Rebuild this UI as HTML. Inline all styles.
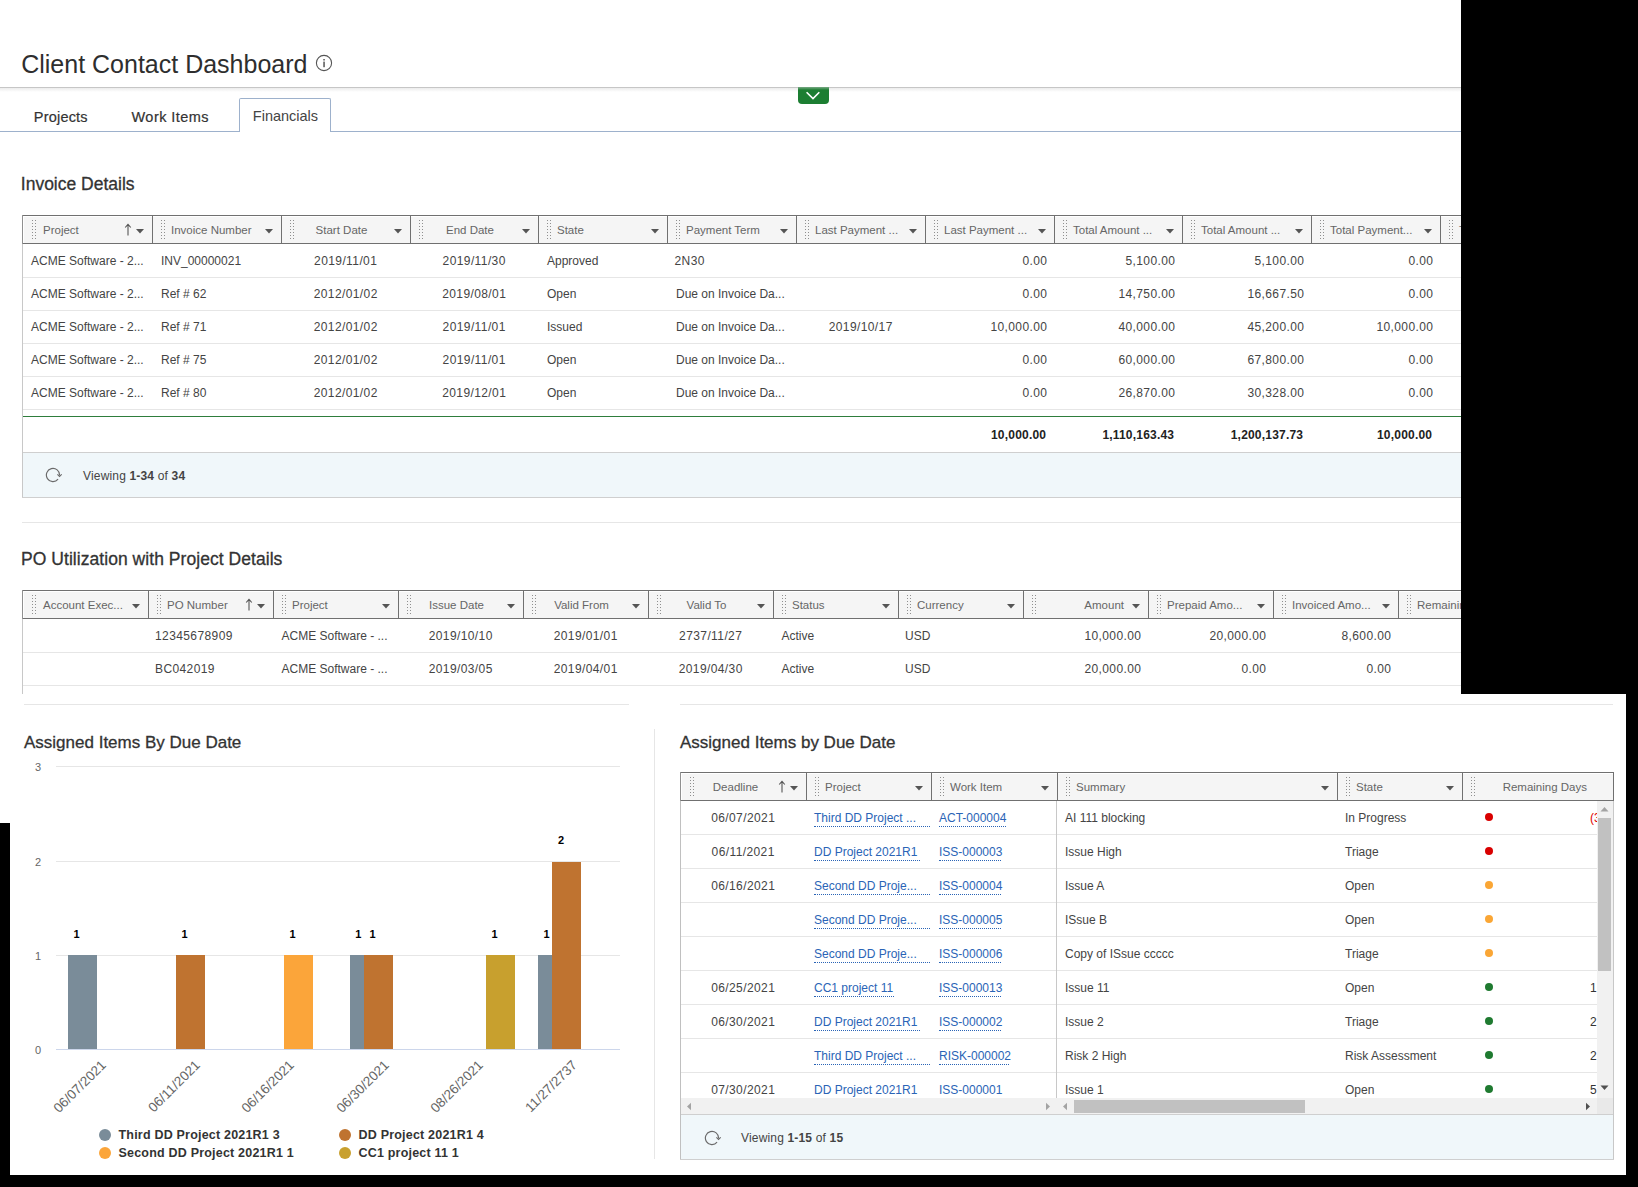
<!DOCTYPE html>
<html><head><meta charset="utf-8"><style>
html,body{margin:0;padding:0;}
body{width:1638px;height:1187px;background:#000;position:relative;overflow:hidden;font-family:"Liberation Sans",sans-serif;}
.t{position:absolute;white-space:nowrap;}
.r{position:absolute;}
</style></head><body>
<div class="r" style="left:0;top:0;width:1461px;height:694px;overflow:hidden;background:#fff">
<div class="t" style="top:48.84px;font-size:25px;line-height:30px;color:#2e2e2e;left:21.2px;">Client Contact Dashboard</div>
<svg class="r" style="left:314px;top:53px" width="20" height="20"><circle cx="10" cy="10" r="7.6" fill="none" stroke="#555" stroke-width="1.1"/><rect x="9.3" y="8.6" width="1.5" height="5.6" fill="#555"/><rect x="9.3" y="6" width="1.5" height="1.5" fill="#555"/></svg>
<div class="r" style="left:0px;top:87px;width:1461px;height:1px;background:#c6c6c6;"></div>
<div class="r" style="left:0px;top:88px;width:1461px;height:4px;background:linear-gradient(#ececec,#fff);"></div>
<svg class="r" style="left:798px;top:87px" width="31" height="17"><path d="M0 0H31V13Q31 17 27 17H4Q0 17 0 13Z" fill="#1c7e32"/><rect x="0" y="0" width="31" height="3" fill="url(#gg)"/><path d="M8.6 5.2L15 11.6L21.3 5.2" fill="none" stroke="#fff" stroke-width="1.6"/><defs><linearGradient id="gg" x1="0" y1="0" x2="0" y2="1"><stop offset="0" stop-color="#7aa985"/><stop offset="1" stop-color="#1c7e32"/></linearGradient></defs></svg>
<div class="r" style="left:0px;top:131px;width:239px;height:1px;background:#9db1cc;"></div>
<div class="r" style="left:331px;top:131px;width:1130px;height:1px;background:#9db1cc;"></div>
<div class="r" style="left:239px;top:98px;width:90px;height:33px;border:1px solid #9db1cc;border-bottom:none;border-radius:2px 2px 0 0;background:#fff"></div>
<div class="t" style="top:108.78px;font-size:14.5px;line-height:17px;color:#333;letter-spacing:0.2px;-webkit-text-stroke:0.2px #333;left:33.8px;">Projects</div>
<div class="t" style="top:108.78px;font-size:14.5px;line-height:17px;color:#333;letter-spacing:0.45px;-webkit-text-stroke:0.2px #333;left:131.5px;">Work Items</div>
<div class="t" style="top:108.48px;font-size:14.5px;line-height:17px;color:#444;left:252.8px;">Financials</div>
<div class="t" style="top:174.44px;font-size:17.5px;line-height:21px;color:#333;-webkit-text-stroke:0.3px #333;left:20.8px;">Invoice Details</div>
<div class="r" style="left:22px;top:215px;width:1439px;height:1px;background:#707070;"></div>
<div class="r" style="left:22px;top:243px;width:1439px;height:1px;background:#707070;"></div>
<div class="r" style="left:23px;top:216px;width:1438px;height:27px;background:#fff;"></div>
<div class="r" style="left:24px;top:217px;width:1437px;height:26px;background:#f5f5f5;"></div>
<div class="r" style="left:22px;top:215px;width:1px;height:29px;background:#909090;"></div>
<svg class="r" style="left:32px;top:220px" width="5" height="21" fill="#8f8f8f"><rect x="0" y="0" width="1" height="1"/><rect x="3" y="0" width="1" height="1"/><rect x="0" y="3" width="1" height="1"/><rect x="3" y="3" width="1" height="1"/><rect x="0" y="6" width="1" height="1"/><rect x="3" y="6" width="1" height="1"/><rect x="0" y="9" width="1" height="1"/><rect x="3" y="9" width="1" height="1"/><rect x="0" y="12" width="1" height="1"/><rect x="3" y="12" width="1" height="1"/><rect x="0" y="15" width="1" height="1"/><rect x="3" y="15" width="1" height="1"/><rect x="0" y="18" width="1" height="1"/><rect x="3" y="18" width="1" height="1"/></svg>
<div class="t" style="top:223.02px;font-size:11.5px;line-height:14px;color:#666;left:43px;">Project</div>
<svg class="r" style="left:135.5px;top:229px" width="8" height="5"><path d="M0 0H8L4 4.5Z" fill="#555"/></svg>
<svg class="r" style="left:123.5px;top:223px" width="8" height="13"><path d="M4 1.5V12.5M1.2 4.5L4 1.3L6.8 4.5" fill="none" stroke="#555" stroke-width="1.1"/></svg>
<div class="r" style="left:152px;top:215px;width:1px;height:28px;background:#707070;"></div>
<svg class="r" style="left:161px;top:220px" width="5" height="21" fill="#8f8f8f"><rect x="0" y="0" width="1" height="1"/><rect x="3" y="0" width="1" height="1"/><rect x="0" y="3" width="1" height="1"/><rect x="3" y="3" width="1" height="1"/><rect x="0" y="6" width="1" height="1"/><rect x="3" y="6" width="1" height="1"/><rect x="0" y="9" width="1" height="1"/><rect x="3" y="9" width="1" height="1"/><rect x="0" y="12" width="1" height="1"/><rect x="3" y="12" width="1" height="1"/><rect x="0" y="15" width="1" height="1"/><rect x="3" y="15" width="1" height="1"/><rect x="0" y="18" width="1" height="1"/><rect x="3" y="18" width="1" height="1"/></svg>
<div class="t" style="top:223.02px;font-size:11.5px;line-height:14px;color:#666;left:171px;">Invoice Number</div>
<svg class="r" style="left:264.5px;top:229px" width="8" height="5"><path d="M0 0H8L4 4.5Z" fill="#555"/></svg>
<div class="r" style="left:281px;top:215px;width:1px;height:28px;background:#707070;"></div>
<svg class="r" style="left:290px;top:220px" width="5" height="21" fill="#8f8f8f"><rect x="0" y="0" width="1" height="1"/><rect x="3" y="0" width="1" height="1"/><rect x="0" y="3" width="1" height="1"/><rect x="3" y="3" width="1" height="1"/><rect x="0" y="6" width="1" height="1"/><rect x="3" y="6" width="1" height="1"/><rect x="0" y="9" width="1" height="1"/><rect x="3" y="9" width="1" height="1"/><rect x="0" y="12" width="1" height="1"/><rect x="3" y="12" width="1" height="1"/><rect x="0" y="15" width="1" height="1"/><rect x="3" y="15" width="1" height="1"/><rect x="0" y="18" width="1" height="1"/><rect x="3" y="18" width="1" height="1"/></svg>
<div class="t" style="top:223.02px;font-size:11.5px;line-height:14px;color:#666;left:141.5px;width:400px;text-align:center;">Start Date</div>
<svg class="r" style="left:393.5px;top:229px" width="8" height="5"><path d="M0 0H8L4 4.5Z" fill="#555"/></svg>
<div class="r" style="left:410px;top:215px;width:1px;height:28px;background:#707070;"></div>
<svg class="r" style="left:419px;top:220px" width="5" height="21" fill="#8f8f8f"><rect x="0" y="0" width="1" height="1"/><rect x="3" y="0" width="1" height="1"/><rect x="0" y="3" width="1" height="1"/><rect x="3" y="3" width="1" height="1"/><rect x="0" y="6" width="1" height="1"/><rect x="3" y="6" width="1" height="1"/><rect x="0" y="9" width="1" height="1"/><rect x="3" y="9" width="1" height="1"/><rect x="0" y="12" width="1" height="1"/><rect x="3" y="12" width="1" height="1"/><rect x="0" y="15" width="1" height="1"/><rect x="3" y="15" width="1" height="1"/><rect x="0" y="18" width="1" height="1"/><rect x="3" y="18" width="1" height="1"/></svg>
<div class="t" style="top:223.02px;font-size:11.5px;line-height:14px;color:#666;left:270.0px;width:400px;text-align:center;">End Date</div>
<svg class="r" style="left:521.5px;top:229px" width="8" height="5"><path d="M0 0H8L4 4.5Z" fill="#555"/></svg>
<div class="r" style="left:538px;top:215px;width:1px;height:28px;background:#707070;"></div>
<svg class="r" style="left:547px;top:220px" width="5" height="21" fill="#8f8f8f"><rect x="0" y="0" width="1" height="1"/><rect x="3" y="0" width="1" height="1"/><rect x="0" y="3" width="1" height="1"/><rect x="3" y="3" width="1" height="1"/><rect x="0" y="6" width="1" height="1"/><rect x="3" y="6" width="1" height="1"/><rect x="0" y="9" width="1" height="1"/><rect x="3" y="9" width="1" height="1"/><rect x="0" y="12" width="1" height="1"/><rect x="3" y="12" width="1" height="1"/><rect x="0" y="15" width="1" height="1"/><rect x="3" y="15" width="1" height="1"/><rect x="0" y="18" width="1" height="1"/><rect x="3" y="18" width="1" height="1"/></svg>
<div class="t" style="top:223.02px;font-size:11.5px;line-height:14px;color:#666;left:557px;">State</div>
<svg class="r" style="left:650.5px;top:229px" width="8" height="5"><path d="M0 0H8L4 4.5Z" fill="#555"/></svg>
<div class="r" style="left:667px;top:215px;width:1px;height:28px;background:#707070;"></div>
<svg class="r" style="left:676px;top:220px" width="5" height="21" fill="#8f8f8f"><rect x="0" y="0" width="1" height="1"/><rect x="3" y="0" width="1" height="1"/><rect x="0" y="3" width="1" height="1"/><rect x="3" y="3" width="1" height="1"/><rect x="0" y="6" width="1" height="1"/><rect x="3" y="6" width="1" height="1"/><rect x="0" y="9" width="1" height="1"/><rect x="3" y="9" width="1" height="1"/><rect x="0" y="12" width="1" height="1"/><rect x="3" y="12" width="1" height="1"/><rect x="0" y="15" width="1" height="1"/><rect x="3" y="15" width="1" height="1"/><rect x="0" y="18" width="1" height="1"/><rect x="3" y="18" width="1" height="1"/></svg>
<div class="t" style="top:223.02px;font-size:11.5px;line-height:14px;color:#666;left:686px;">Payment Term</div>
<svg class="r" style="left:779.5px;top:229px" width="8" height="5"><path d="M0 0H8L4 4.5Z" fill="#555"/></svg>
<div class="r" style="left:796px;top:215px;width:1px;height:28px;background:#707070;"></div>
<svg class="r" style="left:805px;top:220px" width="5" height="21" fill="#8f8f8f"><rect x="0" y="0" width="1" height="1"/><rect x="3" y="0" width="1" height="1"/><rect x="0" y="3" width="1" height="1"/><rect x="3" y="3" width="1" height="1"/><rect x="0" y="6" width="1" height="1"/><rect x="3" y="6" width="1" height="1"/><rect x="0" y="9" width="1" height="1"/><rect x="3" y="9" width="1" height="1"/><rect x="0" y="12" width="1" height="1"/><rect x="3" y="12" width="1" height="1"/><rect x="0" y="15" width="1" height="1"/><rect x="3" y="15" width="1" height="1"/><rect x="0" y="18" width="1" height="1"/><rect x="3" y="18" width="1" height="1"/></svg>
<div class="t" style="top:223.02px;font-size:11.5px;line-height:14px;color:#666;left:815px;">Last Payment ...</div>
<svg class="r" style="left:908.5px;top:229px" width="8" height="5"><path d="M0 0H8L4 4.5Z" fill="#555"/></svg>
<div class="r" style="left:925px;top:215px;width:1px;height:28px;background:#707070;"></div>
<svg class="r" style="left:934px;top:220px" width="5" height="21" fill="#8f8f8f"><rect x="0" y="0" width="1" height="1"/><rect x="3" y="0" width="1" height="1"/><rect x="0" y="3" width="1" height="1"/><rect x="3" y="3" width="1" height="1"/><rect x="0" y="6" width="1" height="1"/><rect x="3" y="6" width="1" height="1"/><rect x="0" y="9" width="1" height="1"/><rect x="3" y="9" width="1" height="1"/><rect x="0" y="12" width="1" height="1"/><rect x="3" y="12" width="1" height="1"/><rect x="0" y="15" width="1" height="1"/><rect x="3" y="15" width="1" height="1"/><rect x="0" y="18" width="1" height="1"/><rect x="3" y="18" width="1" height="1"/></svg>
<div class="t" style="top:223.02px;font-size:11.5px;line-height:14px;color:#666;left:944px;">Last Payment ...</div>
<svg class="r" style="left:1037.5px;top:229px" width="8" height="5"><path d="M0 0H8L4 4.5Z" fill="#555"/></svg>
<div class="r" style="left:1054px;top:215px;width:1px;height:28px;background:#707070;"></div>
<svg class="r" style="left:1063px;top:220px" width="5" height="21" fill="#8f8f8f"><rect x="0" y="0" width="1" height="1"/><rect x="3" y="0" width="1" height="1"/><rect x="0" y="3" width="1" height="1"/><rect x="3" y="3" width="1" height="1"/><rect x="0" y="6" width="1" height="1"/><rect x="3" y="6" width="1" height="1"/><rect x="0" y="9" width="1" height="1"/><rect x="3" y="9" width="1" height="1"/><rect x="0" y="12" width="1" height="1"/><rect x="3" y="12" width="1" height="1"/><rect x="0" y="15" width="1" height="1"/><rect x="3" y="15" width="1" height="1"/><rect x="0" y="18" width="1" height="1"/><rect x="3" y="18" width="1" height="1"/></svg>
<div class="t" style="top:223.02px;font-size:11.5px;line-height:14px;color:#666;left:1073px;">Total Amount ...</div>
<svg class="r" style="left:1165.5px;top:229px" width="8" height="5"><path d="M0 0H8L4 4.5Z" fill="#555"/></svg>
<div class="r" style="left:1182px;top:215px;width:1px;height:28px;background:#707070;"></div>
<svg class="r" style="left:1191px;top:220px" width="5" height="21" fill="#8f8f8f"><rect x="0" y="0" width="1" height="1"/><rect x="3" y="0" width="1" height="1"/><rect x="0" y="3" width="1" height="1"/><rect x="3" y="3" width="1" height="1"/><rect x="0" y="6" width="1" height="1"/><rect x="3" y="6" width="1" height="1"/><rect x="0" y="9" width="1" height="1"/><rect x="3" y="9" width="1" height="1"/><rect x="0" y="12" width="1" height="1"/><rect x="3" y="12" width="1" height="1"/><rect x="0" y="15" width="1" height="1"/><rect x="3" y="15" width="1" height="1"/><rect x="0" y="18" width="1" height="1"/><rect x="3" y="18" width="1" height="1"/></svg>
<div class="t" style="top:223.02px;font-size:11.5px;line-height:14px;color:#666;left:1201px;">Total Amount ...</div>
<svg class="r" style="left:1294.5px;top:229px" width="8" height="5"><path d="M0 0H8L4 4.5Z" fill="#555"/></svg>
<div class="r" style="left:1311px;top:215px;width:1px;height:28px;background:#707070;"></div>
<svg class="r" style="left:1320px;top:220px" width="5" height="21" fill="#8f8f8f"><rect x="0" y="0" width="1" height="1"/><rect x="3" y="0" width="1" height="1"/><rect x="0" y="3" width="1" height="1"/><rect x="3" y="3" width="1" height="1"/><rect x="0" y="6" width="1" height="1"/><rect x="3" y="6" width="1" height="1"/><rect x="0" y="9" width="1" height="1"/><rect x="3" y="9" width="1" height="1"/><rect x="0" y="12" width="1" height="1"/><rect x="3" y="12" width="1" height="1"/><rect x="0" y="15" width="1" height="1"/><rect x="3" y="15" width="1" height="1"/><rect x="0" y="18" width="1" height="1"/><rect x="3" y="18" width="1" height="1"/></svg>
<div class="t" style="top:223.02px;font-size:11.5px;line-height:14px;color:#666;left:1330px;">Total Payment...</div>
<svg class="r" style="left:1423.5px;top:229px" width="8" height="5"><path d="M0 0H8L4 4.5Z" fill="#555"/></svg>
<div class="r" style="left:1440px;top:215px;width:1px;height:28px;background:#707070;"></div>
<svg class="r" style="left:1449px;top:220px" width="5" height="21" fill="#8f8f8f"><rect x="0" y="0" width="1" height="1"/><rect x="3" y="0" width="1" height="1"/><rect x="0" y="3" width="1" height="1"/><rect x="3" y="3" width="1" height="1"/><rect x="0" y="6" width="1" height="1"/><rect x="3" y="6" width="1" height="1"/><rect x="0" y="9" width="1" height="1"/><rect x="3" y="9" width="1" height="1"/><rect x="0" y="12" width="1" height="1"/><rect x="3" y="12" width="1" height="1"/><rect x="0" y="15" width="1" height="1"/><rect x="3" y="15" width="1" height="1"/><rect x="0" y="18" width="1" height="1"/><rect x="3" y="18" width="1" height="1"/></svg>
<div class="t" style="top:223.02px;font-size:11.5px;line-height:14px;color:#666;left:1459px;">Total</div>
<svg class="r" style="left:1552.5px;top:229px" width="8" height="5"><path d="M0 0H8L4 4.5Z" fill="#555"/></svg>
<div class="r" style="left:22px;top:244px;width:1px;height:254px;background:#c8c8c8;"></div>
<div class="r" style="left:23px;top:277px;width:1438px;height:1px;background:#e6e6e6;"></div>
<div class="t" style="top:253.84px;font-size:12px;line-height:14px;color:#444;left:31px;">ACME Software - 2...</div>
<div class="t" style="top:253.84px;font-size:12px;line-height:14px;color:#444;left:161px;">INV_00000021</div>
<div class="t" style="top:253.84px;font-size:12px;line-height:14px;color:#444;letter-spacing:0.4px;left:145.7px;width:400px;text-align:center;">2019/11/01</div>
<div class="t" style="top:253.84px;font-size:12px;line-height:14px;color:#444;letter-spacing:0.4px;left:274.2px;width:400px;text-align:center;">2019/11/30</div>
<div class="t" style="top:253.84px;font-size:12px;line-height:14px;color:#444;left:547px;">Approved</div>
<div class="t" style="top:253.84px;font-size:12px;line-height:14px;color:#444;letter-spacing:0.4px;left:674.5px;">2N30</div>
<div class="t" style="top:253.84px;font-size:12px;line-height:14px;color:#444;letter-spacing:0.4px;left:647.4px;width:400px;text-align:right;">0.00</div>
<div class="t" style="top:253.84px;font-size:12px;line-height:14px;color:#444;letter-spacing:0.4px;left:775.4px;width:400px;text-align:right;">5,100.00</div>
<div class="t" style="top:253.84px;font-size:12px;line-height:14px;color:#444;letter-spacing:0.4px;left:904.4px;width:400px;text-align:right;">5,100.00</div>
<div class="t" style="top:253.84px;font-size:12px;line-height:14px;color:#444;letter-spacing:0.4px;left:1033.4px;width:400px;text-align:right;">0.00</div>
<div class="r" style="left:23px;top:310px;width:1438px;height:1px;background:#e6e6e6;"></div>
<div class="t" style="top:286.84px;font-size:12px;line-height:14px;color:#444;left:31px;">ACME Software - 2...</div>
<div class="t" style="top:286.84px;font-size:12px;line-height:14px;color:#444;left:161px;">Ref # 62</div>
<div class="t" style="top:286.84px;font-size:12px;line-height:14px;color:#444;letter-spacing:0.4px;left:145.7px;width:400px;text-align:center;">2012/01/02</div>
<div class="t" style="top:286.84px;font-size:12px;line-height:14px;color:#444;letter-spacing:0.4px;left:274.2px;width:400px;text-align:center;">2019/08/01</div>
<div class="t" style="top:286.84px;font-size:12px;line-height:14px;color:#444;left:547px;">Open</div>
<div class="t" style="top:286.84px;font-size:12px;line-height:14px;color:#444;left:676px;">Due on Invoice Da...</div>
<div class="t" style="top:286.84px;font-size:12px;line-height:14px;color:#444;letter-spacing:0.4px;left:647.4px;width:400px;text-align:right;">0.00</div>
<div class="t" style="top:286.84px;font-size:12px;line-height:14px;color:#444;letter-spacing:0.4px;left:775.4px;width:400px;text-align:right;">14,750.00</div>
<div class="t" style="top:286.84px;font-size:12px;line-height:14px;color:#444;letter-spacing:0.4px;left:904.4px;width:400px;text-align:right;">16,667.50</div>
<div class="t" style="top:286.84px;font-size:12px;line-height:14px;color:#444;letter-spacing:0.4px;left:1033.4px;width:400px;text-align:right;">0.00</div>
<div class="r" style="left:23px;top:343px;width:1438px;height:1px;background:#e6e6e6;"></div>
<div class="t" style="top:319.84px;font-size:12px;line-height:14px;color:#444;left:31px;">ACME Software - 2...</div>
<div class="t" style="top:319.84px;font-size:12px;line-height:14px;color:#444;left:161px;">Ref # 71</div>
<div class="t" style="top:319.84px;font-size:12px;line-height:14px;color:#444;letter-spacing:0.4px;left:145.7px;width:400px;text-align:center;">2012/01/02</div>
<div class="t" style="top:319.84px;font-size:12px;line-height:14px;color:#444;letter-spacing:0.4px;left:274.2px;width:400px;text-align:center;">2019/11/01</div>
<div class="t" style="top:319.84px;font-size:12px;line-height:14px;color:#444;left:547px;">Issued</div>
<div class="t" style="top:319.84px;font-size:12px;line-height:14px;color:#444;left:676px;">Due on Invoice Da...</div>
<div class="t" style="top:319.84px;font-size:12px;line-height:14px;color:#444;letter-spacing:0.4px;left:660.7px;width:400px;text-align:center;">2019/10/17</div>
<div class="t" style="top:319.84px;font-size:12px;line-height:14px;color:#444;letter-spacing:0.4px;left:647.4px;width:400px;text-align:right;">10,000.00</div>
<div class="t" style="top:319.84px;font-size:12px;line-height:14px;color:#444;letter-spacing:0.4px;left:775.4px;width:400px;text-align:right;">40,000.00</div>
<div class="t" style="top:319.84px;font-size:12px;line-height:14px;color:#444;letter-spacing:0.4px;left:904.4px;width:400px;text-align:right;">45,200.00</div>
<div class="t" style="top:319.84px;font-size:12px;line-height:14px;color:#444;letter-spacing:0.4px;left:1033.4px;width:400px;text-align:right;">10,000.00</div>
<div class="r" style="left:23px;top:376px;width:1438px;height:1px;background:#e6e6e6;"></div>
<div class="t" style="top:352.84px;font-size:12px;line-height:14px;color:#444;left:31px;">ACME Software - 2...</div>
<div class="t" style="top:352.84px;font-size:12px;line-height:14px;color:#444;left:161px;">Ref # 75</div>
<div class="t" style="top:352.84px;font-size:12px;line-height:14px;color:#444;letter-spacing:0.4px;left:145.7px;width:400px;text-align:center;">2012/01/02</div>
<div class="t" style="top:352.84px;font-size:12px;line-height:14px;color:#444;letter-spacing:0.4px;left:274.2px;width:400px;text-align:center;">2019/11/01</div>
<div class="t" style="top:352.84px;font-size:12px;line-height:14px;color:#444;left:547px;">Open</div>
<div class="t" style="top:352.84px;font-size:12px;line-height:14px;color:#444;left:676px;">Due on Invoice Da...</div>
<div class="t" style="top:352.84px;font-size:12px;line-height:14px;color:#444;letter-spacing:0.4px;left:647.4px;width:400px;text-align:right;">0.00</div>
<div class="t" style="top:352.84px;font-size:12px;line-height:14px;color:#444;letter-spacing:0.4px;left:775.4px;width:400px;text-align:right;">60,000.00</div>
<div class="t" style="top:352.84px;font-size:12px;line-height:14px;color:#444;letter-spacing:0.4px;left:904.4px;width:400px;text-align:right;">67,800.00</div>
<div class="t" style="top:352.84px;font-size:12px;line-height:14px;color:#444;letter-spacing:0.4px;left:1033.4px;width:400px;text-align:right;">0.00</div>
<div class="r" style="left:23px;top:409px;width:1438px;height:1px;background:#e6e6e6;"></div>
<div class="t" style="top:385.84px;font-size:12px;line-height:14px;color:#444;left:31px;">ACME Software - 2...</div>
<div class="t" style="top:385.84px;font-size:12px;line-height:14px;color:#444;left:161px;">Ref # 80</div>
<div class="t" style="top:385.84px;font-size:12px;line-height:14px;color:#444;letter-spacing:0.4px;left:145.7px;width:400px;text-align:center;">2012/01/02</div>
<div class="t" style="top:385.84px;font-size:12px;line-height:14px;color:#444;letter-spacing:0.4px;left:274.2px;width:400px;text-align:center;">2019/12/01</div>
<div class="t" style="top:385.84px;font-size:12px;line-height:14px;color:#444;left:547px;">Open</div>
<div class="t" style="top:385.84px;font-size:12px;line-height:14px;color:#444;left:676px;">Due on Invoice Da...</div>
<div class="t" style="top:385.84px;font-size:12px;line-height:14px;color:#444;letter-spacing:0.4px;left:647.4px;width:400px;text-align:right;">0.00</div>
<div class="t" style="top:385.84px;font-size:12px;line-height:14px;color:#444;letter-spacing:0.4px;left:775.4px;width:400px;text-align:right;">26,870.00</div>
<div class="t" style="top:385.84px;font-size:12px;line-height:14px;color:#444;letter-spacing:0.4px;left:904.4px;width:400px;text-align:right;">30,328.00</div>
<div class="t" style="top:385.84px;font-size:12px;line-height:14px;color:#444;letter-spacing:0.4px;left:1033.4px;width:400px;text-align:right;">0.00</div>
<div class="r" style="left:23px;top:416px;width:1438px;height:1px;background:#2e7d3c;"></div>
<div class="t" style="top:427.84px;font-size:12px;line-height:14px;color:#222;font-weight:bold;letter-spacing:0.2px;left:646.2px;width:400px;text-align:right;">10,000.00</div>
<div class="t" style="top:427.84px;font-size:12px;line-height:14px;color:#222;font-weight:bold;letter-spacing:0.2px;left:774.2px;width:400px;text-align:right;">1,110,163.43</div>
<div class="t" style="top:427.84px;font-size:12px;line-height:14px;color:#222;font-weight:bold;letter-spacing:0.2px;left:903.2px;width:400px;text-align:right;">1,200,137.73</div>
<div class="t" style="top:427.84px;font-size:12px;line-height:14px;color:#222;font-weight:bold;letter-spacing:0.2px;left:1032.2px;width:400px;text-align:right;">10,000.00</div>
<div class="r" style="left:23px;top:452px;width:1438px;height:1px;background:#cfcfcf;"></div>
<div class="r" style="left:23px;top:453px;width:1438px;height:44px;background:#f0f7fa;"></div>
<div class="r" style="left:22px;top:497px;width:1439px;height:1px;background:#cfcfcf;"></div>
<svg class="r" style="left:45px;top:467px" width="17" height="17"><path d="M13.06 12.24A6.6 6.6 0 1 1 14.57 8.4" fill="none" stroke="#6a6a6a" stroke-width="1.15"/><path d="M12.4 7.3L14.55 9.4L16.7 7.3" fill="none" stroke="#6a6a6a" stroke-width="1.15"/></svg>
<div class="t" style="top:468.84px;font-size:12px;line-height:14px;color:#444;letter-spacing:0.17px;left:83px;">Viewing <b>1-34</b> of <b>34</b></div>
<div class="r" style="left:22px;top:522px;width:1439px;height:1px;background:#e6e6e6;"></div>
<div class="t" style="top:549.44px;font-size:17.5px;line-height:21px;color:#333;letter-spacing:0.05px;-webkit-text-stroke:0.3px #333;left:21px;">PO Utilization with Project Details</div>
<div class="r" style="left:22px;top:590px;width:1439px;height:1px;background:#707070;"></div>
<div class="r" style="left:22px;top:618px;width:1439px;height:1px;background:#707070;"></div>
<div class="r" style="left:23px;top:591px;width:1438px;height:27px;background:#fff;"></div>
<div class="r" style="left:24px;top:592px;width:1437px;height:26px;background:#f5f5f5;"></div>
<div class="r" style="left:22px;top:590px;width:1px;height:29px;background:#909090;"></div>
<svg class="r" style="left:32px;top:595px" width="5" height="21" fill="#8f8f8f"><rect x="0" y="0" width="1" height="1"/><rect x="3" y="0" width="1" height="1"/><rect x="0" y="3" width="1" height="1"/><rect x="3" y="3" width="1" height="1"/><rect x="0" y="6" width="1" height="1"/><rect x="3" y="6" width="1" height="1"/><rect x="0" y="9" width="1" height="1"/><rect x="3" y="9" width="1" height="1"/><rect x="0" y="12" width="1" height="1"/><rect x="3" y="12" width="1" height="1"/><rect x="0" y="15" width="1" height="1"/><rect x="3" y="15" width="1" height="1"/><rect x="0" y="18" width="1" height="1"/><rect x="3" y="18" width="1" height="1"/></svg>
<div class="t" style="top:598.02px;font-size:11.5px;line-height:14px;color:#666;left:43px;">Account Exec...</div>
<svg class="r" style="left:131.5px;top:604px" width="8" height="5"><path d="M0 0H8L4 4.5Z" fill="#555"/></svg>
<div class="r" style="left:148px;top:590px;width:1px;height:28px;background:#707070;"></div>
<svg class="r" style="left:157px;top:595px" width="5" height="21" fill="#8f8f8f"><rect x="0" y="0" width="1" height="1"/><rect x="3" y="0" width="1" height="1"/><rect x="0" y="3" width="1" height="1"/><rect x="3" y="3" width="1" height="1"/><rect x="0" y="6" width="1" height="1"/><rect x="3" y="6" width="1" height="1"/><rect x="0" y="9" width="1" height="1"/><rect x="3" y="9" width="1" height="1"/><rect x="0" y="12" width="1" height="1"/><rect x="3" y="12" width="1" height="1"/><rect x="0" y="15" width="1" height="1"/><rect x="3" y="15" width="1" height="1"/><rect x="0" y="18" width="1" height="1"/><rect x="3" y="18" width="1" height="1"/></svg>
<div class="t" style="top:598.02px;font-size:11.5px;line-height:14px;color:#666;left:167px;">PO Number</div>
<svg class="r" style="left:256.5px;top:604px" width="8" height="5"><path d="M0 0H8L4 4.5Z" fill="#555"/></svg>
<svg class="r" style="left:244.5px;top:598px" width="8" height="13"><path d="M4 1.5V12.5M1.2 4.5L4 1.3L6.8 4.5" fill="none" stroke="#555" stroke-width="1.1"/></svg>
<div class="r" style="left:273px;top:590px;width:1px;height:28px;background:#707070;"></div>
<svg class="r" style="left:282px;top:595px" width="5" height="21" fill="#8f8f8f"><rect x="0" y="0" width="1" height="1"/><rect x="3" y="0" width="1" height="1"/><rect x="0" y="3" width="1" height="1"/><rect x="3" y="3" width="1" height="1"/><rect x="0" y="6" width="1" height="1"/><rect x="3" y="6" width="1" height="1"/><rect x="0" y="9" width="1" height="1"/><rect x="3" y="9" width="1" height="1"/><rect x="0" y="12" width="1" height="1"/><rect x="3" y="12" width="1" height="1"/><rect x="0" y="15" width="1" height="1"/><rect x="3" y="15" width="1" height="1"/><rect x="0" y="18" width="1" height="1"/><rect x="3" y="18" width="1" height="1"/></svg>
<div class="t" style="top:598.02px;font-size:11.5px;line-height:14px;color:#666;left:292px;">Project</div>
<svg class="r" style="left:381.5px;top:604px" width="8" height="5"><path d="M0 0H8L4 4.5Z" fill="#555"/></svg>
<div class="r" style="left:398px;top:590px;width:1px;height:28px;background:#707070;"></div>
<svg class="r" style="left:407px;top:595px" width="5" height="21" fill="#8f8f8f"><rect x="0" y="0" width="1" height="1"/><rect x="3" y="0" width="1" height="1"/><rect x="0" y="3" width="1" height="1"/><rect x="3" y="3" width="1" height="1"/><rect x="0" y="6" width="1" height="1"/><rect x="3" y="6" width="1" height="1"/><rect x="0" y="9" width="1" height="1"/><rect x="3" y="9" width="1" height="1"/><rect x="0" y="12" width="1" height="1"/><rect x="3" y="12" width="1" height="1"/><rect x="0" y="15" width="1" height="1"/><rect x="3" y="15" width="1" height="1"/><rect x="0" y="18" width="1" height="1"/><rect x="3" y="18" width="1" height="1"/></svg>
<div class="t" style="top:598.02px;font-size:11.5px;line-height:14px;color:#666;left:256.5px;width:400px;text-align:center;">Issue Date</div>
<svg class="r" style="left:506.5px;top:604px" width="8" height="5"><path d="M0 0H8L4 4.5Z" fill="#555"/></svg>
<div class="r" style="left:523px;top:590px;width:1px;height:28px;background:#707070;"></div>
<svg class="r" style="left:532px;top:595px" width="5" height="21" fill="#8f8f8f"><rect x="0" y="0" width="1" height="1"/><rect x="3" y="0" width="1" height="1"/><rect x="0" y="3" width="1" height="1"/><rect x="3" y="3" width="1" height="1"/><rect x="0" y="6" width="1" height="1"/><rect x="3" y="6" width="1" height="1"/><rect x="0" y="9" width="1" height="1"/><rect x="3" y="9" width="1" height="1"/><rect x="0" y="12" width="1" height="1"/><rect x="3" y="12" width="1" height="1"/><rect x="0" y="15" width="1" height="1"/><rect x="3" y="15" width="1" height="1"/><rect x="0" y="18" width="1" height="1"/><rect x="3" y="18" width="1" height="1"/></svg>
<div class="t" style="top:598.02px;font-size:11.5px;line-height:14px;color:#666;left:381.5px;width:400px;text-align:center;">Valid From</div>
<svg class="r" style="left:631.5px;top:604px" width="8" height="5"><path d="M0 0H8L4 4.5Z" fill="#555"/></svg>
<div class="r" style="left:648px;top:590px;width:1px;height:28px;background:#707070;"></div>
<svg class="r" style="left:657px;top:595px" width="5" height="21" fill="#8f8f8f"><rect x="0" y="0" width="1" height="1"/><rect x="3" y="0" width="1" height="1"/><rect x="0" y="3" width="1" height="1"/><rect x="3" y="3" width="1" height="1"/><rect x="0" y="6" width="1" height="1"/><rect x="3" y="6" width="1" height="1"/><rect x="0" y="9" width="1" height="1"/><rect x="3" y="9" width="1" height="1"/><rect x="0" y="12" width="1" height="1"/><rect x="3" y="12" width="1" height="1"/><rect x="0" y="15" width="1" height="1"/><rect x="3" y="15" width="1" height="1"/><rect x="0" y="18" width="1" height="1"/><rect x="3" y="18" width="1" height="1"/></svg>
<div class="t" style="top:598.02px;font-size:11.5px;line-height:14px;color:#666;left:506.5px;width:400px;text-align:center;">Valid To</div>
<svg class="r" style="left:756.5px;top:604px" width="8" height="5"><path d="M0 0H8L4 4.5Z" fill="#555"/></svg>
<div class="r" style="left:773px;top:590px;width:1px;height:28px;background:#707070;"></div>
<svg class="r" style="left:782px;top:595px" width="5" height="21" fill="#8f8f8f"><rect x="0" y="0" width="1" height="1"/><rect x="3" y="0" width="1" height="1"/><rect x="0" y="3" width="1" height="1"/><rect x="3" y="3" width="1" height="1"/><rect x="0" y="6" width="1" height="1"/><rect x="3" y="6" width="1" height="1"/><rect x="0" y="9" width="1" height="1"/><rect x="3" y="9" width="1" height="1"/><rect x="0" y="12" width="1" height="1"/><rect x="3" y="12" width="1" height="1"/><rect x="0" y="15" width="1" height="1"/><rect x="3" y="15" width="1" height="1"/><rect x="0" y="18" width="1" height="1"/><rect x="3" y="18" width="1" height="1"/></svg>
<div class="t" style="top:598.02px;font-size:11.5px;line-height:14px;color:#666;left:792px;">Status</div>
<svg class="r" style="left:881.5px;top:604px" width="8" height="5"><path d="M0 0H8L4 4.5Z" fill="#555"/></svg>
<div class="r" style="left:898px;top:590px;width:1px;height:28px;background:#707070;"></div>
<svg class="r" style="left:907px;top:595px" width="5" height="21" fill="#8f8f8f"><rect x="0" y="0" width="1" height="1"/><rect x="3" y="0" width="1" height="1"/><rect x="0" y="3" width="1" height="1"/><rect x="3" y="3" width="1" height="1"/><rect x="0" y="6" width="1" height="1"/><rect x="3" y="6" width="1" height="1"/><rect x="0" y="9" width="1" height="1"/><rect x="3" y="9" width="1" height="1"/><rect x="0" y="12" width="1" height="1"/><rect x="3" y="12" width="1" height="1"/><rect x="0" y="15" width="1" height="1"/><rect x="3" y="15" width="1" height="1"/><rect x="0" y="18" width="1" height="1"/><rect x="3" y="18" width="1" height="1"/></svg>
<div class="t" style="top:598.02px;font-size:11.5px;line-height:14px;color:#666;left:917px;">Currency</div>
<svg class="r" style="left:1006.5px;top:604px" width="8" height="5"><path d="M0 0H8L4 4.5Z" fill="#555"/></svg>
<div class="r" style="left:1023px;top:590px;width:1px;height:28px;background:#707070;"></div>
<svg class="r" style="left:1032px;top:595px" width="5" height="21" fill="#8f8f8f"><rect x="0" y="0" width="1" height="1"/><rect x="3" y="0" width="1" height="1"/><rect x="0" y="3" width="1" height="1"/><rect x="3" y="3" width="1" height="1"/><rect x="0" y="6" width="1" height="1"/><rect x="3" y="6" width="1" height="1"/><rect x="0" y="9" width="1" height="1"/><rect x="3" y="9" width="1" height="1"/><rect x="0" y="12" width="1" height="1"/><rect x="3" y="12" width="1" height="1"/><rect x="0" y="15" width="1" height="1"/><rect x="3" y="15" width="1" height="1"/><rect x="0" y="18" width="1" height="1"/><rect x="3" y="18" width="1" height="1"/></svg>
<div class="t" style="top:598.02px;font-size:11.5px;line-height:14px;color:#666;left:724px;width:400px;text-align:right;">Amount</div>
<svg class="r" style="left:1131.5px;top:604px" width="8" height="5"><path d="M0 0H8L4 4.5Z" fill="#555"/></svg>
<div class="r" style="left:1148px;top:590px;width:1px;height:28px;background:#707070;"></div>
<svg class="r" style="left:1157px;top:595px" width="5" height="21" fill="#8f8f8f"><rect x="0" y="0" width="1" height="1"/><rect x="3" y="0" width="1" height="1"/><rect x="0" y="3" width="1" height="1"/><rect x="3" y="3" width="1" height="1"/><rect x="0" y="6" width="1" height="1"/><rect x="3" y="6" width="1" height="1"/><rect x="0" y="9" width="1" height="1"/><rect x="3" y="9" width="1" height="1"/><rect x="0" y="12" width="1" height="1"/><rect x="3" y="12" width="1" height="1"/><rect x="0" y="15" width="1" height="1"/><rect x="3" y="15" width="1" height="1"/><rect x="0" y="18" width="1" height="1"/><rect x="3" y="18" width="1" height="1"/></svg>
<div class="t" style="top:598.02px;font-size:11.5px;line-height:14px;color:#666;left:1167px;">Prepaid Amo...</div>
<svg class="r" style="left:1256.5px;top:604px" width="8" height="5"><path d="M0 0H8L4 4.5Z" fill="#555"/></svg>
<div class="r" style="left:1273px;top:590px;width:1px;height:28px;background:#707070;"></div>
<svg class="r" style="left:1282px;top:595px" width="5" height="21" fill="#8f8f8f"><rect x="0" y="0" width="1" height="1"/><rect x="3" y="0" width="1" height="1"/><rect x="0" y="3" width="1" height="1"/><rect x="3" y="3" width="1" height="1"/><rect x="0" y="6" width="1" height="1"/><rect x="3" y="6" width="1" height="1"/><rect x="0" y="9" width="1" height="1"/><rect x="3" y="9" width="1" height="1"/><rect x="0" y="12" width="1" height="1"/><rect x="3" y="12" width="1" height="1"/><rect x="0" y="15" width="1" height="1"/><rect x="3" y="15" width="1" height="1"/><rect x="0" y="18" width="1" height="1"/><rect x="3" y="18" width="1" height="1"/></svg>
<div class="t" style="top:598.02px;font-size:11.5px;line-height:14px;color:#666;left:1292px;">Invoiced Amo...</div>
<svg class="r" style="left:1381.5px;top:604px" width="8" height="5"><path d="M0 0H8L4 4.5Z" fill="#555"/></svg>
<div class="r" style="left:1398px;top:590px;width:1px;height:28px;background:#707070;"></div>
<svg class="r" style="left:1407px;top:595px" width="5" height="21" fill="#8f8f8f"><rect x="0" y="0" width="1" height="1"/><rect x="3" y="0" width="1" height="1"/><rect x="0" y="3" width="1" height="1"/><rect x="3" y="3" width="1" height="1"/><rect x="0" y="6" width="1" height="1"/><rect x="3" y="6" width="1" height="1"/><rect x="0" y="9" width="1" height="1"/><rect x="3" y="9" width="1" height="1"/><rect x="0" y="12" width="1" height="1"/><rect x="3" y="12" width="1" height="1"/><rect x="0" y="15" width="1" height="1"/><rect x="3" y="15" width="1" height="1"/><rect x="0" y="18" width="1" height="1"/><rect x="3" y="18" width="1" height="1"/></svg>
<div class="t" style="top:598.02px;font-size:11.5px;line-height:14px;color:#666;left:1417px;">Remaining</div>
<svg class="r" style="left:1506.5px;top:604px" width="8" height="5"><path d="M0 0H8L4 4.5Z" fill="#555"/></svg>
<div class="r" style="left:22px;top:619px;width:1px;height:76px;background:#c8c8c8;"></div>
<div class="r" style="left:23px;top:652px;width:1438px;height:1px;background:#e6e6e6;"></div>
<div class="t" style="top:628.84px;font-size:12px;line-height:14px;color:#444;letter-spacing:0.4px;left:155.0px;">12345678909</div>
<div class="t" style="top:628.84px;font-size:12px;line-height:14px;color:#444;left:281.5px;">ACME Software - ...</div>
<div class="t" style="top:628.84px;font-size:12px;line-height:14px;color:#444;letter-spacing:0.4px;left:260.7px;width:400px;text-align:center;">2019/10/10</div>
<div class="t" style="top:628.84px;font-size:12px;line-height:14px;color:#444;letter-spacing:0.4px;left:385.7px;width:400px;text-align:center;">2019/01/01</div>
<div class="t" style="top:628.84px;font-size:12px;line-height:14px;color:#444;letter-spacing:0.4px;left:510.7px;width:400px;text-align:center;">2737/11/27</div>
<div class="t" style="top:628.84px;font-size:12px;line-height:14px;color:#444;left:781.5px;">Active</div>
<div class="t" style="top:628.84px;font-size:12px;line-height:14px;color:#444;left:905.0px;">USD</div>
<div class="t" style="top:628.84px;font-size:12px;line-height:14px;color:#444;letter-spacing:0.4px;left:741.4px;width:400px;text-align:right;">10,000.00</div>
<div class="t" style="top:628.84px;font-size:12px;line-height:14px;color:#444;letter-spacing:0.4px;left:866.4px;width:400px;text-align:right;">20,000.00</div>
<div class="t" style="top:628.84px;font-size:12px;line-height:14px;color:#444;letter-spacing:0.4px;left:991.4px;width:400px;text-align:right;">8,600.00</div>
<div class="r" style="left:23px;top:685px;width:1438px;height:1px;background:#e6e6e6;"></div>
<div class="t" style="top:661.84px;font-size:12px;line-height:14px;color:#444;letter-spacing:0.4px;left:155.0px;">BC042019</div>
<div class="t" style="top:661.84px;font-size:12px;line-height:14px;color:#444;left:281.5px;">ACME Software - ...</div>
<div class="t" style="top:661.84px;font-size:12px;line-height:14px;color:#444;letter-spacing:0.4px;left:260.7px;width:400px;text-align:center;">2019/03/05</div>
<div class="t" style="top:661.84px;font-size:12px;line-height:14px;color:#444;letter-spacing:0.4px;left:385.7px;width:400px;text-align:center;">2019/04/01</div>
<div class="t" style="top:661.84px;font-size:12px;line-height:14px;color:#444;letter-spacing:0.4px;left:510.7px;width:400px;text-align:center;">2019/04/30</div>
<div class="t" style="top:661.84px;font-size:12px;line-height:14px;color:#444;left:781.5px;">Active</div>
<div class="t" style="top:661.84px;font-size:12px;line-height:14px;color:#444;left:905.0px;">USD</div>
<div class="t" style="top:661.84px;font-size:12px;line-height:14px;color:#444;letter-spacing:0.4px;left:741.4px;width:400px;text-align:right;">20,000.00</div>
<div class="t" style="top:661.84px;font-size:12px;line-height:14px;color:#444;letter-spacing:0.4px;left:866.4px;width:400px;text-align:right;">0.00</div>
<div class="t" style="top:661.84px;font-size:12px;line-height:14px;color:#444;letter-spacing:0.4px;left:991.4px;width:400px;text-align:right;">0.00</div>
</div>
<div class="r" style="left:0;top:694px;width:1626px;height:481px;overflow:hidden;background:#fff"><div class="r" style="left:0;top:-694px;width:1626px;height:1187px">
<div class="r" style="left:24px;top:704px;width:605px;height:1px;background:#e6e6e6;"></div>
<div class="r" style="left:680px;top:704px;width:933px;height:1px;background:#e6e6e6;"></div>
<div class="r" style="left:654px;top:729px;width:1px;height:430px;background:#e6e6e6;"></div>
<div class="t" style="top:733.11px;font-size:17px;line-height:20px;color:#333;-webkit-text-stroke:0.3px #333;left:24px;">Assigned Items By Due Date</div>
<div class="r" style="left:56px;top:766px;width:564px;height:1px;background:#e6e6e6;"></div>
<div class="r" style="left:56px;top:861px;width:564px;height:1px;background:#e6e6e6;"></div>
<div class="r" style="left:56px;top:955px;width:564px;height:1px;background:#e6e6e6;"></div>
<div class="r" style="left:56px;top:1049px;width:564px;height:1px;background:#ccd6eb;"></div>
<div class="t" style="top:761.19px;font-size:11px;line-height:13px;color:#666;left:-359px;width:400px;text-align:right;">3</div>
<div class="t" style="top:856.19px;font-size:11px;line-height:13px;color:#666;left:-359px;width:400px;text-align:right;">2</div>
<div class="t" style="top:950.19px;font-size:11px;line-height:13px;color:#666;left:-359px;width:400px;text-align:right;">1</div>
<div class="t" style="top:1044.19px;font-size:11px;line-height:13px;color:#666;left:-359px;width:400px;text-align:right;">0</div>
<div class="r" style="left:68px;top:955px;width:29px;height:94px;background:#7a8c99;"></div>
<div class="r" style="left:176px;top:955px;width:29px;height:94px;background:#bf7330;"></div>
<div class="r" style="left:284px;top:955px;width:29px;height:94px;background:#fba53a;"></div>
<div class="r" style="left:350px;top:955px;width:14px;height:94px;background:#7a8c99;"></div>
<div class="r" style="left:364px;top:955px;width:29px;height:94px;background:#bf7330;"></div>
<div class="r" style="left:486px;top:955px;width:29px;height:94px;background:#c8a02e;"></div>
<div class="r" style="left:538px;top:955px;width:14px;height:94px;background:#7a8c99;"></div>
<div class="r" style="left:552px;top:862px;width:29px;height:187px;background:#bf7330;"></div>
<div class="t" style="top:928.19px;font-size:11px;line-height:13px;color:#000;font-weight:bold;left:-123.5px;width:400px;text-align:center;">1</div>
<div class="t" style="top:928.19px;font-size:11px;line-height:13px;color:#000;font-weight:bold;left:-15.5px;width:400px;text-align:center;">1</div>
<div class="t" style="top:928.19px;font-size:11px;line-height:13px;color:#000;font-weight:bold;left:92.5px;width:400px;text-align:center;">1</div>
<div class="t" style="top:928.19px;font-size:11px;line-height:13px;color:#000;font-weight:bold;left:158.3px;width:400px;text-align:center;">1</div>
<div class="t" style="top:928.19px;font-size:11px;line-height:13px;color:#000;font-weight:bold;left:172.5px;width:400px;text-align:center;">1</div>
<div class="t" style="top:928.19px;font-size:11px;line-height:13px;color:#000;font-weight:bold;left:294.6px;width:400px;text-align:center;">1</div>
<div class="t" style="top:928.19px;font-size:11px;line-height:13px;color:#000;font-weight:bold;left:346.5px;width:400px;text-align:center;">1</div>
<div class="t" style="top:834.19px;font-size:11px;line-height:13px;color:#000;font-weight:bold;left:361.0px;width:400px;text-align:center;">2</div>
<div class="t" style="left:3.5px;top:1056px;width:100px;height:14px;text-align:right;font-size:13.5px;line-height:14px;color:#666;transform-origin:100% 50%;transform:rotate(-45deg)">06/07/2021</div>
<div class="t" style="left:97.5px;top:1056px;width:100px;height:14px;text-align:right;font-size:13.5px;line-height:14px;color:#666;transform-origin:100% 50%;transform:rotate(-45deg)">06/11/2021</div>
<div class="t" style="left:191.5px;top:1056px;width:100px;height:14px;text-align:right;font-size:13.5px;line-height:14px;color:#666;transform-origin:100% 50%;transform:rotate(-45deg)">06/16/2021</div>
<div class="t" style="left:286.5px;top:1056px;width:100px;height:14px;text-align:right;font-size:13.5px;line-height:14px;color:#666;transform-origin:100% 50%;transform:rotate(-45deg)">06/30/2021</div>
<div class="t" style="left:380.5px;top:1056px;width:100px;height:14px;text-align:right;font-size:13.5px;line-height:14px;color:#666;transform-origin:100% 50%;transform:rotate(-45deg)">08/26/2021</div>
<div class="t" style="left:474.5px;top:1056px;width:100px;height:14px;text-align:right;font-size:13.5px;line-height:14px;color:#666;transform-origin:100% 50%;transform:rotate(-45deg)">11/27/2737</div>
<div class="r" style="left:99px;top:1128.5px;width:12px;height:12px;border-radius:50%;background:#7a8c99"></div>
<div class="t" style="top:1127.97px;font-size:12.5px;line-height:15px;color:#333;font-weight:bold;letter-spacing:0.2px;left:118.5px;">Third DD Project 2021R1 3</div>
<div class="r" style="left:99px;top:1146.5px;width:12px;height:12px;border-radius:50%;background:#fba53a"></div>
<div class="t" style="top:1145.97px;font-size:12.5px;line-height:15px;color:#333;font-weight:bold;letter-spacing:0.2px;left:118.5px;">Second DD Project 2021R1 1</div>
<div class="r" style="left:339px;top:1128.5px;width:12px;height:12px;border-radius:50%;background:#bf7330"></div>
<div class="t" style="top:1127.97px;font-size:12.5px;line-height:15px;color:#333;font-weight:bold;letter-spacing:0.2px;left:358.5px;">DD Project 2021R1 4</div>
<div class="r" style="left:339px;top:1146.5px;width:12px;height:12px;border-radius:50%;background:#c8a02e"></div>
<div class="t" style="top:1145.97px;font-size:12.5px;line-height:15px;color:#333;font-weight:bold;letter-spacing:0.2px;left:358.5px;">CC1 project 11 1</div>
<div class="t" style="top:733.11px;font-size:17px;line-height:20px;color:#333;-webkit-text-stroke:0.3px #333;left:680px;">Assigned Items by Due Date</div>
<div class="r" style="left:680px;top:772px;width:934px;height:1px;background:#707070;"></div>
<div class="r" style="left:680px;top:800px;width:934px;height:1px;background:#707070;"></div>
<div class="r" style="left:681px;top:773px;width:933px;height:27px;background:#fff;"></div>
<div class="r" style="left:682px;top:774px;width:932px;height:26px;background:#f5f5f5;"></div>
<div class="r" style="left:680px;top:772px;width:1px;height:29px;background:#909090;"></div>
<svg class="r" style="left:690px;top:777px" width="5" height="21" fill="#8f8f8f"><rect x="0" y="0" width="1" height="1"/><rect x="3" y="0" width="1" height="1"/><rect x="0" y="3" width="1" height="1"/><rect x="3" y="3" width="1" height="1"/><rect x="0" y="6" width="1" height="1"/><rect x="3" y="6" width="1" height="1"/><rect x="0" y="9" width="1" height="1"/><rect x="3" y="9" width="1" height="1"/><rect x="0" y="12" width="1" height="1"/><rect x="3" y="12" width="1" height="1"/><rect x="0" y="15" width="1" height="1"/><rect x="3" y="15" width="1" height="1"/><rect x="0" y="18" width="1" height="1"/><rect x="3" y="18" width="1" height="1"/></svg>
<div class="t" style="top:780.02px;font-size:11.5px;line-height:14px;color:#666;left:535.5px;width:400px;text-align:center;">Deadline</div>
<svg class="r" style="left:789.5px;top:786px" width="8" height="5"><path d="M0 0H8L4 4.5Z" fill="#555"/></svg>
<svg class="r" style="left:777.5px;top:780px" width="8" height="13"><path d="M4 1.5V12.5M1.2 4.5L4 1.3L6.8 4.5" fill="none" stroke="#555" stroke-width="1.1"/></svg>
<div class="r" style="left:806px;top:772px;width:1px;height:28px;background:#707070;"></div>
<svg class="r" style="left:815px;top:777px" width="5" height="21" fill="#8f8f8f"><rect x="0" y="0" width="1" height="1"/><rect x="3" y="0" width="1" height="1"/><rect x="0" y="3" width="1" height="1"/><rect x="3" y="3" width="1" height="1"/><rect x="0" y="6" width="1" height="1"/><rect x="3" y="6" width="1" height="1"/><rect x="0" y="9" width="1" height="1"/><rect x="3" y="9" width="1" height="1"/><rect x="0" y="12" width="1" height="1"/><rect x="3" y="12" width="1" height="1"/><rect x="0" y="15" width="1" height="1"/><rect x="3" y="15" width="1" height="1"/><rect x="0" y="18" width="1" height="1"/><rect x="3" y="18" width="1" height="1"/></svg>
<div class="t" style="top:780.02px;font-size:11.5px;line-height:14px;color:#666;left:825px;">Project</div>
<svg class="r" style="left:914.5px;top:786px" width="8" height="5"><path d="M0 0H8L4 4.5Z" fill="#555"/></svg>
<div class="r" style="left:931px;top:772px;width:1px;height:28px;background:#707070;"></div>
<svg class="r" style="left:940px;top:777px" width="5" height="21" fill="#8f8f8f"><rect x="0" y="0" width="1" height="1"/><rect x="3" y="0" width="1" height="1"/><rect x="0" y="3" width="1" height="1"/><rect x="3" y="3" width="1" height="1"/><rect x="0" y="6" width="1" height="1"/><rect x="3" y="6" width="1" height="1"/><rect x="0" y="9" width="1" height="1"/><rect x="3" y="9" width="1" height="1"/><rect x="0" y="12" width="1" height="1"/><rect x="3" y="12" width="1" height="1"/><rect x="0" y="15" width="1" height="1"/><rect x="3" y="15" width="1" height="1"/><rect x="0" y="18" width="1" height="1"/><rect x="3" y="18" width="1" height="1"/></svg>
<div class="t" style="top:780.02px;font-size:11.5px;line-height:14px;color:#666;left:950px;">Work Item</div>
<svg class="r" style="left:1040.5px;top:786px" width="8" height="5"><path d="M0 0H8L4 4.5Z" fill="#555"/></svg>
<div class="r" style="left:1057px;top:772px;width:1px;height:28px;background:#707070;"></div>
<svg class="r" style="left:1066px;top:777px" width="5" height="21" fill="#8f8f8f"><rect x="0" y="0" width="1" height="1"/><rect x="3" y="0" width="1" height="1"/><rect x="0" y="3" width="1" height="1"/><rect x="3" y="3" width="1" height="1"/><rect x="0" y="6" width="1" height="1"/><rect x="3" y="6" width="1" height="1"/><rect x="0" y="9" width="1" height="1"/><rect x="3" y="9" width="1" height="1"/><rect x="0" y="12" width="1" height="1"/><rect x="3" y="12" width="1" height="1"/><rect x="0" y="15" width="1" height="1"/><rect x="3" y="15" width="1" height="1"/><rect x="0" y="18" width="1" height="1"/><rect x="3" y="18" width="1" height="1"/></svg>
<div class="t" style="top:780.02px;font-size:11.5px;line-height:14px;color:#666;left:1076px;">Summary</div>
<svg class="r" style="left:1320.5px;top:786px" width="8" height="5"><path d="M0 0H8L4 4.5Z" fill="#555"/></svg>
<div class="r" style="left:1337px;top:772px;width:1px;height:28px;background:#707070;"></div>
<svg class="r" style="left:1346px;top:777px" width="5" height="21" fill="#8f8f8f"><rect x="0" y="0" width="1" height="1"/><rect x="3" y="0" width="1" height="1"/><rect x="0" y="3" width="1" height="1"/><rect x="3" y="3" width="1" height="1"/><rect x="0" y="6" width="1" height="1"/><rect x="3" y="6" width="1" height="1"/><rect x="0" y="9" width="1" height="1"/><rect x="3" y="9" width="1" height="1"/><rect x="0" y="12" width="1" height="1"/><rect x="3" y="12" width="1" height="1"/><rect x="0" y="15" width="1" height="1"/><rect x="3" y="15" width="1" height="1"/><rect x="0" y="18" width="1" height="1"/><rect x="3" y="18" width="1" height="1"/></svg>
<div class="t" style="top:780.02px;font-size:11.5px;line-height:14px;color:#666;left:1356px;">State</div>
<svg class="r" style="left:1445.5px;top:786px" width="8" height="5"><path d="M0 0H8L4 4.5Z" fill="#555"/></svg>
<div class="r" style="left:1462px;top:772px;width:1px;height:28px;background:#707070;"></div>
<svg class="r" style="left:1471px;top:777px" width="5" height="21" fill="#8f8f8f"><rect x="0" y="0" width="1" height="1"/><rect x="3" y="0" width="1" height="1"/><rect x="0" y="3" width="1" height="1"/><rect x="3" y="3" width="1" height="1"/><rect x="0" y="6" width="1" height="1"/><rect x="3" y="6" width="1" height="1"/><rect x="0" y="9" width="1" height="1"/><rect x="3" y="9" width="1" height="1"/><rect x="0" y="12" width="1" height="1"/><rect x="3" y="12" width="1" height="1"/><rect x="0" y="15" width="1" height="1"/><rect x="3" y="15" width="1" height="1"/><rect x="0" y="18" width="1" height="1"/><rect x="3" y="18" width="1" height="1"/></svg>
<div class="t" style="top:780.02px;font-size:11.5px;line-height:14px;color:#666;left:1187px;width:400px;text-align:right;">Remaining Days</div>
<div class="r" style="left:1613px;top:772px;width:1px;height:29px;background:#707070;"></div>
<div class="r" style="left:680px;top:801px;width:1px;height:358px;background:#c0c0c0;"></div>
<div class="r" style="left:1613px;top:801px;width:1px;height:358px;background:#c8c8c8;"></div>
<div class="r" style="left:681px;top:834px;width:916px;height:1px;background:#e6e6e6;"></div>
<div class="t" style="top:810.84px;font-size:12px;line-height:14px;color:#444;letter-spacing:0.4px;left:543.2px;width:400px;text-align:center;">06/07/2021</div>
<div class="t" style="top:810.84px;font-size:12px;line-height:14px;color:#2a64b6;left:814px;">Third DD Project ...</div>
<div class="t" style="top:810.84px;font-size:12px;line-height:14px;color:#2a64b6;left:939px;">ACT-000004</div>
<div class="r" style="left:814px;top:826px;width:116px;height:0;border-top:1px dotted #2a64b6"></div>
<div class="r" style="left:939px;top:826px;width:67px;height:0;border-top:1px dotted #2a64b6"></div>
<div class="t" style="top:810.84px;font-size:12px;line-height:14px;color:#444;left:1065px;">AI 111 blocking</div>
<div class="t" style="top:810.84px;font-size:12px;line-height:14px;color:#444;left:1345px;">In Progress</div>
<div class="r" style="left:1484.8px;top:812.8px;width:8.4px;height:8.4px;border-radius:50%;background:#d90000"></div>
<div class="t" style="top:810.84px;font-size:12px;line-height:14px;color:#e00000;left:1590px;">(3</div>
<div class="r" style="left:681px;top:868px;width:916px;height:1px;background:#e6e6e6;"></div>
<div class="t" style="top:844.84px;font-size:12px;line-height:14px;color:#444;letter-spacing:0.4px;left:543.2px;width:400px;text-align:center;">06/11/2021</div>
<div class="t" style="top:844.84px;font-size:12px;line-height:14px;color:#2a64b6;left:814px;">DD Project 2021R1</div>
<div class="t" style="top:844.84px;font-size:12px;line-height:14px;color:#2a64b6;left:939px;">ISS-000003</div>
<div class="r" style="left:814px;top:860px;width:106px;height:0;border-top:1px dotted #2a64b6"></div>
<div class="r" style="left:939px;top:860px;width:62px;height:0;border-top:1px dotted #2a64b6"></div>
<div class="t" style="top:844.84px;font-size:12px;line-height:14px;color:#444;left:1065px;">Issue High</div>
<div class="t" style="top:844.84px;font-size:12px;line-height:14px;color:#444;left:1345px;">Triage</div>
<div class="r" style="left:1484.8px;top:846.8px;width:8.4px;height:8.4px;border-radius:50%;background:#d90000"></div>
<div class="r" style="left:681px;top:902px;width:916px;height:1px;background:#e6e6e6;"></div>
<div class="t" style="top:878.84px;font-size:12px;line-height:14px;color:#444;letter-spacing:0.4px;left:543.2px;width:400px;text-align:center;">06/16/2021</div>
<div class="t" style="top:878.84px;font-size:12px;line-height:14px;color:#2a64b6;left:814px;">Second DD Proje...</div>
<div class="t" style="top:878.84px;font-size:12px;line-height:14px;color:#2a64b6;left:939px;">ISS-000004</div>
<div class="r" style="left:814px;top:894px;width:116px;height:0;border-top:1px dotted #2a64b6"></div>
<div class="r" style="left:939px;top:894px;width:62px;height:0;border-top:1px dotted #2a64b6"></div>
<div class="t" style="top:878.84px;font-size:12px;line-height:14px;color:#444;left:1065px;">Issue A</div>
<div class="t" style="top:878.84px;font-size:12px;line-height:14px;color:#444;left:1345px;">Open</div>
<div class="r" style="left:1484.8px;top:880.8px;width:8.4px;height:8.4px;border-radius:50%;background:#faa635"></div>
<div class="r" style="left:681px;top:936px;width:916px;height:1px;background:#e6e6e6;"></div>
<div class="t" style="top:912.84px;font-size:12px;line-height:14px;color:#2a64b6;left:814px;">Second DD Proje...</div>
<div class="t" style="top:912.84px;font-size:12px;line-height:14px;color:#2a64b6;left:939px;">ISS-000005</div>
<div class="r" style="left:814px;top:928px;width:116px;height:0;border-top:1px dotted #2a64b6"></div>
<div class="r" style="left:939px;top:928px;width:62px;height:0;border-top:1px dotted #2a64b6"></div>
<div class="t" style="top:912.84px;font-size:12px;line-height:14px;color:#444;left:1065px;">ISsue B</div>
<div class="t" style="top:912.84px;font-size:12px;line-height:14px;color:#444;left:1345px;">Open</div>
<div class="r" style="left:1484.8px;top:914.8px;width:8.4px;height:8.4px;border-radius:50%;background:#faa635"></div>
<div class="r" style="left:681px;top:970px;width:916px;height:1px;background:#e6e6e6;"></div>
<div class="t" style="top:946.84px;font-size:12px;line-height:14px;color:#2a64b6;left:814px;">Second DD Proje...</div>
<div class="t" style="top:946.84px;font-size:12px;line-height:14px;color:#2a64b6;left:939px;">ISS-000006</div>
<div class="r" style="left:814px;top:962px;width:116px;height:0;border-top:1px dotted #2a64b6"></div>
<div class="r" style="left:939px;top:962px;width:62px;height:0;border-top:1px dotted #2a64b6"></div>
<div class="t" style="top:946.84px;font-size:12px;line-height:14px;color:#444;left:1065px;">Copy of ISsue ccccc</div>
<div class="t" style="top:946.84px;font-size:12px;line-height:14px;color:#444;left:1345px;">Triage</div>
<div class="r" style="left:1484.8px;top:948.8px;width:8.4px;height:8.4px;border-radius:50%;background:#faa635"></div>
<div class="r" style="left:681px;top:1004px;width:916px;height:1px;background:#e6e6e6;"></div>
<div class="t" style="top:980.84px;font-size:12px;line-height:14px;color:#444;letter-spacing:0.4px;left:543.2px;width:400px;text-align:center;">06/25/2021</div>
<div class="t" style="top:980.84px;font-size:12px;line-height:14px;color:#2a64b6;left:814px;">CC1 project 11</div>
<div class="t" style="top:980.84px;font-size:12px;line-height:14px;color:#2a64b6;left:939px;">ISS-000013</div>
<div class="r" style="left:814px;top:996px;width:80px;height:0;border-top:1px dotted #2a64b6"></div>
<div class="r" style="left:939px;top:996px;width:62px;height:0;border-top:1px dotted #2a64b6"></div>
<div class="t" style="top:980.84px;font-size:12px;line-height:14px;color:#444;left:1065px;">Issue 11</div>
<div class="t" style="top:980.84px;font-size:12px;line-height:14px;color:#444;left:1345px;">Open</div>
<div class="r" style="left:1484.8px;top:982.8px;width:8.4px;height:8.4px;border-radius:50%;background:#1f7a30"></div>
<div class="t" style="top:980.84px;font-size:12px;line-height:14px;color:#333;left:1590px;">1</div>
<div class="r" style="left:681px;top:1038px;width:916px;height:1px;background:#e6e6e6;"></div>
<div class="t" style="top:1014.84px;font-size:12px;line-height:14px;color:#444;letter-spacing:0.4px;left:543.2px;width:400px;text-align:center;">06/30/2021</div>
<div class="t" style="top:1014.84px;font-size:12px;line-height:14px;color:#2a64b6;left:814px;">DD Project 2021R1</div>
<div class="t" style="top:1014.84px;font-size:12px;line-height:14px;color:#2a64b6;left:939px;">ISS-000002</div>
<div class="r" style="left:814px;top:1030px;width:106px;height:0;border-top:1px dotted #2a64b6"></div>
<div class="r" style="left:939px;top:1030px;width:62px;height:0;border-top:1px dotted #2a64b6"></div>
<div class="t" style="top:1014.84px;font-size:12px;line-height:14px;color:#444;left:1065px;">Issue 2</div>
<div class="t" style="top:1014.84px;font-size:12px;line-height:14px;color:#444;left:1345px;">Triage</div>
<div class="r" style="left:1484.8px;top:1016.8px;width:8.4px;height:8.4px;border-radius:50%;background:#1f7a30"></div>
<div class="t" style="top:1014.84px;font-size:12px;line-height:14px;color:#333;left:1590px;">2</div>
<div class="r" style="left:681px;top:1072px;width:916px;height:1px;background:#e6e6e6;"></div>
<div class="t" style="top:1048.84px;font-size:12px;line-height:14px;color:#2a64b6;left:814px;">Third DD Project ...</div>
<div class="t" style="top:1048.84px;font-size:12px;line-height:14px;color:#2a64b6;left:939px;">RISK-000002</div>
<div class="r" style="left:814px;top:1064px;width:116px;height:0;border-top:1px dotted #2a64b6"></div>
<div class="r" style="left:939px;top:1064px;width:70px;height:0;border-top:1px dotted #2a64b6"></div>
<div class="t" style="top:1048.84px;font-size:12px;line-height:14px;color:#444;left:1065px;">Risk 2 High</div>
<div class="t" style="top:1048.84px;font-size:12px;line-height:14px;color:#444;left:1345px;">Risk Assessment</div>
<div class="r" style="left:1484.8px;top:1050.8px;width:8.4px;height:8.4px;border-radius:50%;background:#1f7a30"></div>
<div class="t" style="top:1048.84px;font-size:12px;line-height:14px;color:#333;left:1590px;">2</div>
<div class="t" style="top:1082.84px;font-size:12px;line-height:14px;color:#444;letter-spacing:0.4px;left:543.2px;width:400px;text-align:center;">07/30/2021</div>
<div class="t" style="top:1082.84px;font-size:12px;line-height:14px;color:#2a64b6;left:814px;">DD Project 2021R1</div>
<div class="t" style="top:1082.84px;font-size:12px;line-height:14px;color:#2a64b6;left:939px;">ISS-000001</div>
<div class="r" style="left:814px;top:1098px;width:106px;height:0;border-top:1px dotted #2a64b6"></div>
<div class="r" style="left:939px;top:1098px;width:62px;height:0;border-top:1px dotted #2a64b6"></div>
<div class="t" style="top:1082.84px;font-size:12px;line-height:14px;color:#444;left:1065px;">Issue 1</div>
<div class="t" style="top:1082.84px;font-size:12px;line-height:14px;color:#444;left:1345px;">Open</div>
<div class="r" style="left:1484.8px;top:1084.8px;width:8.4px;height:8.4px;border-radius:50%;background:#1f7a30"></div>
<div class="t" style="top:1082.84px;font-size:12px;line-height:14px;color:#333;left:1590px;">5</div>
<div class="r" style="left:1056px;top:801px;width:1px;height:313px;background:#c8c8c8;"></div>
<div class="r" style="left:1597px;top:801px;width:16px;height:313px;background:#f1f1f1;"></div>
<div class="r" style="left:1598px;top:818px;width:13px;height:153px;background:#c1c1c1;"></div>
<svg class="r" style="left:1600px;top:806px" width="9" height="6"><path d="M0.5 5.5H8.5L4.5 1Z" fill="#a3a3a3"/></svg>
<svg class="r" style="left:1600px;top:1085px" width="9" height="6"><path d="M0.5 0.5H8.5L4.5 5Z" fill="#505050"/></svg>
<div class="r" style="left:681px;top:1098px;width:916px;height:16px;background:#f1f1f1;"></div>
<div class="r" style="left:1074px;top:1100px;width:231px;height:13px;background:#c1c1c1;"></div>
<svg class="r" style="left:686px;top:1102px" width="6" height="9"><path d="M5 0.8V8.2L1 4.5Z" fill="#a3a3a3"/></svg>
<svg class="r" style="left:1045px;top:1102px" width="6" height="9"><path d="M1 0.8V8.2L5 4.5Z" fill="#a3a3a3"/></svg>
<svg class="r" style="left:1062px;top:1102px" width="6" height="9"><path d="M5 0.8V8.2L1 4.5Z" fill="#a3a3a3"/></svg>
<svg class="r" style="left:1585px;top:1102px" width="6" height="9"><path d="M1 0.8V8.2L5 4.5Z" fill="#505050"/></svg>
<div class="r" style="left:1597px;top:1098px;width:16px;height:16px;background:#e9e9e9;"></div>
<div class="r" style="left:681px;top:1114px;width:932px;height:1px;background:#cfcfcf;"></div>
<div class="r" style="left:681px;top:1115px;width:932px;height:44px;background:#f0f7fa;"></div>
<div class="r" style="left:680px;top:1159px;width:934px;height:1px;background:#cfcfcf;"></div>
<svg class="r" style="left:703.5px;top:1129.5px" width="17" height="17"><path d="M13.06 12.24A6.6 6.6 0 1 1 14.57 8.4" fill="none" stroke="#6a6a6a" stroke-width="1.15"/><path d="M12.4 7.3L14.55 9.4L16.7 7.3" fill="none" stroke="#6a6a6a" stroke-width="1.15"/></svg>
<div class="t" style="top:1130.84px;font-size:12px;line-height:14px;color:#444;letter-spacing:0.17px;left:741px;">Viewing <b>1-15</b> of <b>15</b></div>
</div></div>
<div class="r" style="left:0px;top:823px;width:10px;height:352px;background:#000;"></div>
</body></html>
